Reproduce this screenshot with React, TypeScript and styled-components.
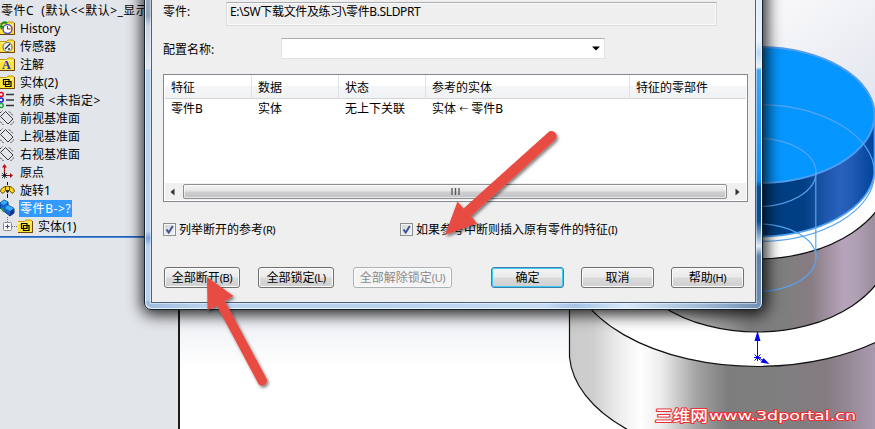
import React from "react";
import styled, { createGlobalStyle } from "styled-components";

const Global = createGlobalStyle`
  *{box-sizing:border-box}
  body{margin:0;overflow:hidden;font-family:"Noto Sans","Noto Sans CJK SC",sans-serif;font-size:12px;color:#000}
`;

const Screen = styled.div`
  position: relative;
  width: 875px;
  height: 429px;
  overflow: hidden;
  display: flex;
`;
const TreePanel = styled.div`
  width: 180px;
  height: 429px;
  flex: none;
  background: #e2e5ea;
  border-right: 2px solid #1c1c1c;
  padding-top: 1px;
`;
const TreeRow = styled.div<{ $indent?: number }>`
  display: flex;
  align-items: center;
  height: 18px;
  padding-left: ${(p) => p.$indent ?? 0}px;
  white-space: nowrap;
`;
const IconCell = styled.span`
  width: 19px;
  height: 18px;
  flex: none;
  svg { display: block; }
`;
const TreeText = styled.span<{ $selected?: boolean; $ls?: number }>`
  height: 17px;
  line-height: 17px;
  padding: 0 1px;
  letter-spacing: ${(p) => p.$ls ?? 0}px;
  color: ${(p) => (p.$selected ? "#fff" : "#000")};
  background: ${(p) => (p.$selected ? "#3399ff" : "transparent")};
`;
const Rollback = styled.div`
  height: 2px;
  margin-top: 1px;
  background: #1f62b8;
  border-bottom: 1px solid #4c86cf;
`;
const Viewport = styled.div`
  flex: 1;
  height: 429px;
  svg { display: block; }
`;

const Dialog = styled.div`
  position: absolute;
  left: 144px;
  top: -20px;
  width: 619px;
  height: 330px;
  border: 1px solid #18222c;
  border-radius: 0 0 7px 7px;
  padding: 0 6px 6px;
  background:
    linear-gradient(90deg, #9dbbdd 0, #b9d2ef 60px, #b7d1f0 230px, #c6dcf5 400px, #a3c2e6 430px, #d6e8fa 480px, #9fb9d6 560px, #6f8eb2 618px) left bottom / 100% 8px no-repeat,
    linear-gradient(180deg, #dcecfb 0, #e8f3fd 60px, #b5d9fa 72px, #e4f2fe 86px, #45a6f3 89px, #1493fa 190px, #0d8af0 200px, #0b4c93 206px, #0c4c90 240px, #dcecfb 265px, #5c83ad 275px, #6f8eb2 100%) right top / 8px 100% no-repeat,
    linear-gradient(180deg, #a2b1c4 0, #94a6bc 35px, #c9d5e3 45px, #dfe8f2 88px, #b5d0ef 89px, #bcd5f2 250px, #7ba5dc 257px, #b9d2ef 265px, #b9d2ef 100%) left top / 8px 100% no-repeat;
  box-shadow: inset 1px -1px 0 rgba(255,255,255,.7), inset -1px 0 0 #e4f3ff, 1px 2px 15px 3px rgba(0, 0, 0, 0.85);
`;
const Client = styled.div`
  height: 100%;
  background: #efefef;
  border: 1px solid #4c6076;
  border-top: 0;
  padding: 21px 7px 0 11px;
  outline: 1px solid rgba(255, 255, 255, 0.45);
`;
const FormRow = styled.div<{ $h: number }>`
  display: flex;
  height: ${(p) => p.$h}px;
`;
const Label = styled.label<{ $w: number; $drop: number }>`
  width: ${(p) => p.$w}px;
  flex: none;
  line-height: 18px;
  padding-top: ${(p) => p.$drop}px;
`;
const PathField = styled.div`
  width: 491px;
  height: 24px;
  border: 1px solid #d9dde2;
  border-top-color: #abadb3;
  box-shadow: inset 0 0 0 1px #fafafa;
  padding-left: 3px;
  line-height: 18px;
  white-space: nowrap;
  letter-spacing: -0.35px;
`;
const Combo = styled.div`
  width: 324px;
  height: 21px;
  display: flex;
  align-items: center;
  justify-content: flex-end;
  padding-right: 4px;
  background: #fff;
  border: 1px solid #dfe2e8;
  border-top-color: #abadb3;
`;
const Table = styled.div`
  margin-top: 15px;
  width: 585px;
  height: 128px;
  display: flex;
  flex-direction: column;
  background: #fff;
  border: 1px solid #828790;
`;
const Columns = styled.div<{ $head?: boolean }>`
  display: grid;
  grid-template-columns: 87px 87px 87px 204px 1fr;
  height: ${(p) => (p.$head ? 24 : 20)}px;
  line-height: ${(p) => (p.$head ? 26 : 19)}px;
  margin: 0 1px;
  border-bottom: ${(p) => (p.$head ? "1px solid #d5d5d5" : "0")};
  background: ${(p) => (p.$head ? "linear-gradient(#fff 45%, #f4f5f7 50%, #f1f2f4)" : "#fff")};
`;
const Cell = styled.div<{ $head?: boolean }>`
  padding-left: 6px;
  border-right: 1px solid ${(p) => (p.$head ? "#dfe1e5" : "transparent")};
  white-space: nowrap;
  &:last-child { border-right: 0; }
`;
const SmallArrow = styled.span`
  font-size: 9px;
  line-height: 1;
  vertical-align: 1px;
`;
const Scrollbar = styled.div`
  margin: auto 1px 1px;
  height: 17px;
  display: flex;
  background: #f0f0f0;
`;
const ScrollButton = styled.div<{ $w: number; $shift?: number }>`
  width: ${(p) => p.$w}px;
  display: flex;
  align-items: center;
  justify-content: center;
  padding-left: ${(p) => p.$shift ?? 0}px;
  padding-right: ${(p) => (p.$shift ? 0 : 3)}px;
`;
const Thumb = styled.div`
  flex: 1;
  margin: 1px 0;
  display: flex;
  align-items: center;
  justify-content: center;
  border: 1px solid #8e8f8f;
  border-radius: 2px;
  box-shadow: inset 0 0 0 1px rgba(255, 255, 255, 0.6);
  background: linear-gradient(#f3f3f3, #e5e5e6 48%, #cfcfd1 52%, #c2c3c6);
`;
const Checks = styled.div`
  display: flex;
  margin-top: 21px;
  height: 13px;
`;
const Check = styled.label<{ $w: number }>`
  width: ${(p) => p.$w}px;
  display: flex;
  align-items: center;
  gap: 3px;
  white-space: nowrap;
  line-height: 13px;
`;
const Box = styled.span`
  width: 13px;
  height: 13px;
  flex: none;
  border: 1px solid #8e8f8f;
  box-shadow: inset 0 0 0 1px #f6f6f6;
  background: linear-gradient(135deg, #cbcfd5, #f6f6f6);
  svg { display: block; }
`;
const Access = styled.span`
  font-size: 11px;
  letter-spacing: -0.4px;
`;
const Buttons = styled.div`
  display: flex;
  margin: 31px 0 0 1px;
`;
const Button = styled.button<{ $w: number; $gap?: number; $kind?: "default" | "off" }>`
  width: ${(p) => p.$w}px;
  height: 21px;
  margin: 0 ${(p) => p.$gap ?? 0}px 0 0;
  padding: 0;
  font: inherit;
  line-height: 19px;
  white-space: nowrap;
  border-radius: 3px;
  color: ${(p) => (p.$kind === "off" ? "#8a8a8a" : "#000")};
  border: 1px solid ${(p) => (p.$kind === "off" ? "#adb2b5" : p.$kind === "default" ? "#3c7fb1" : "#707070")};
  box-shadow: inset 0 0 0 ${(p) => (p.$kind === "default" ? "1px #3ccbf5" : "1px #fbfbfb")};
  background: ${(p) => (p.$kind === "off" ? "#f4f4f4" : "linear-gradient(#f2f2f2 0, #ebebeb 48%, #dadada 52%, #cfcfcf)")};
`;
const Overlay = styled.svg`
  position: absolute;
  left: 0;
  top: 0;
  pointer-events: none;
`;

const Folder = ({ children }: { children?: React.ReactNode }) => (
  <svg width="17" height="18" viewBox="0 0 17 18">
    <path d="M-1 4.5V15.5H14.5V4.5L13 3H8L6.5 4.5Z" fill="#ffe23c" stroke="#c99a00" />
    <path d="M0 6H13" stroke="#fff7a8" />
    <path d="M-1 15.5H14.5V4" fill="none" stroke="#70450c" />
    {children}
  </svg>
);
const Plane = () => (
  <svg width="17" height="18" viewBox="0 0 17 18" fill="none" stroke="#222" strokeWidth=".9">
    <path d="M0.500 7.500L5.500 2.500L13 10L8 15Z" />
    <path d="M0 4L2.500 1.500M10.500 16L14 12.500M0 12.500L3.500 16M9 2.500L13.500 7" strokeDasharray="2 1" />
  </svg>
);
const Cubes = () => (
  <g fill="none" stroke="#000" strokeWidth="1.2">
    <path d="M3.500 6.500h5.500v5h-5.500zM5.500 8.500h5.500v5h-5.500z" />
  </g>
);

const icons: Record<string, React.ReactNode> = {
  history: (
    <Folder>
      <circle cx="7.5" cy="10" r="4.5" fill="#fff" stroke="#5050bd" strokeWidth="1.5" />
      <path d="M7.500 7v3h3" fill="none" stroke="#d31616" />
      <path d="M1 8C1 4 4 2 7 4" fill="none" stroke="#148f22" strokeWidth="2" />
      <path d="M0 7h4l-3 4z" fill="#148f22" />
    </Folder>
  ),
  sensor: (
    <Folder>
      <circle cx="7.5" cy="10" r="4.5" fill="#eaf0f4" stroke="#777" strokeWidth="1.2" />
      <path d="M5 12l5-5M8 12h2" stroke="#23313e" strokeWidth="1.3" />
    </Folder>
  ),
  note: (
    <Folder>
      <text x="2" y="14" fontFamily="Liberation Serif" fontWeight="bold" fontSize="12" fill="#1533bd">A</text>
    </Folder>
  ),
  body: <Folder><Cubes /></Folder>,
  material: (
    <svg width="17" height="18" viewBox="0 0 17 18">
      <g strokeWidth="1.5" fill="#fff">
        <circle cx="1.2" cy="3.5" r="2" stroke="#e00020" />
        <circle cx="1.2" cy="9" r="2" stroke="#1720d0" />
        <circle cx="1.2" cy="14.5" r="2" stroke="#11a52d" />
      </g>
      <path d="M6 3.500h8M6 9h8M6 14.500h8" stroke="#333" strokeWidth="1.6" />
    </svg>
  ),
  plane: <Plane />,
  origin: (
    <svg width="17" height="18" viewBox="0 0 17 18">
      <path d="M4.500 12V2M5 12.500H12" stroke="#a80b16" strokeWidth="1.2" />
      <path d="M2 4.500L4.500 1L7 4.500ZM10 10l3 2.500L10 15Z" fill="#b20b16" />
      <path d="M2 10l5 5M7 10l-5 5M1.500 12.500h6M4.500 9.500v6" stroke="#111" strokeWidth=".8" />
    </svg>
  ),
  revolve: (
    <svg width="17" height="18" viewBox="0 0 17 18">
      <path d="M7.500 1v3M7.500 13v4" stroke="#111" />
      <path d="M.5 10.500C1 3.500 14 3.500 14.500 10.500L12 12.500L9.500 9.500H5.500L3 12.500Z" fill="#ffd52c" stroke="#665000" />
      <path d="M5.500 5.500v4M9.500 5.500v4" stroke="#665000" />
      <path d="M5.500 9.500h4l-2 3z" fill="#2b2100" />
    </svg>
  ),
  part: (
    <svg width="17" height="18" viewBox="0 0 17 18">
      <path d="M0 4L4 1L8 3V6L14 9.500V14L10 17L0 9Z" fill="#1267cf" stroke="#062c78" />
      <path d="M0 4L4 1L8 3L4 6ZM5 9L8 6L14 9.500L10 12Z" fill="#35aef8" />
      <path d="M10 12V16L13.500 13.500V10Z" fill="#0a378f" />
      <path d="M1 9l3 4" stroke="#2fa33a" strokeWidth="1.5" />
    </svg>
  ),
};

const rows: { t: string; i: string; ls?: number; sel?: boolean }[] = [
  { t: "History", i: "history" },
  { t: "传感器", i: "sensor" },
  { t: "注解", i: "note" },
  { t: "实体(2)", i: "body" },
  { t: "材质 <未指定>", i: "material", ls: 0.5 },
  { t: "前视基准面", i: "plane" },
  { t: "上视基准面", i: "plane" },
  { t: "右视基准面", i: "plane" },
  { t: "原点", i: "origin" },
  { t: "旋转1", i: "revolve" },
  { t: "零件B->?", i: "part", sel: true, ls: 0.6 },
];

const Tick = () => (
  <svg width="11" height="11" viewBox="0 0 11 11">
    <path d="M2.500 5.500L4.700 8.500L8.800 2" fill="none" stroke="#3c5198" strokeWidth="1.9" />
  </svg>
);

const Model = () => (
  <svg width="695" height="429" viewBox="180 0 695 429">
    <defs>
      <linearGradient id="sky" x1="0" y1="0" x2="0" y2="1">
        <stop offset="0" stopColor="#f4f5f7" />
        <stop offset=".28" stopColor="#dfe2ea" />
        <stop offset=".72" stopColor="#eceef3" />
        <stop offset=".86" stopColor="#fff" />
      </linearGradient>
      <linearGradient id="corner" gradientUnits="userSpaceOnUse" x1="790" y1="0" x2="870" y2="110">
        <stop offset="0" stopColor="#f8f8fa" />
        <stop offset="1" stopColor="#e2e5ee" />
      </linearGradient>
      <linearGradient id="base" gradientUnits="userSpaceOnUse" x1="569" y1="0" x2="875" y2="0">
        <stop offset="0" stopColor="#cacaca" />
        <stop offset=".08" stopColor="#cfcfcf" />
        <stop offset=".16" stopColor="#ececec" />
        <stop offset=".235" stopColor="#fff" />
        <stop offset=".3" stopColor="#ededed" />
        <stop offset=".42" stopColor="#a2a2a2" />
        <stop offset=".52" stopColor="#7d7d7d" />
        <stop offset=".68" stopColor="#7f7e7f" />
        <stop offset=".84" stopColor="#857b82" />
        <stop offset="1" stopColor="#aa9aaf" />
      </linearGradient>
      <linearGradient id="mid" gradientUnits="userSpaceOnUse" x1="660" y1="0" x2="875" y2="0">
        <stop offset="0" stopColor="#f0f0f0" />
        <stop offset=".2" stopColor="#b0b0b0" />
        <stop offset=".42" stopColor="#7d7d7d" />
        <stop offset=".6" stopColor="#7f7e7f" />
        <stop offset=".7" stopColor="#877c83" />
        <stop offset=".85" stopColor="#b5a3b9" />
        <stop offset=".9" stopColor="#b3a2b7" />
        <stop offset="1" stopColor="#9b8d9d" />
      </linearGradient>
      <linearGradient id="blue" gradientUnits="userSpaceOnUse" x1="757" y1="0" x2="875" y2="0">
        <stop offset="0" stopColor="#003d80" />
        <stop offset=".4" stopColor="#003f85" />
        <stop offset=".52" stopColor="#164f9f" />
        <stop offset=".7" stopColor="#2962be" />
        <stop offset=".8" stopColor="#205bb5" />
        <stop offset="1" stopColor="#00429a" />
      </linearGradient>
    </defs>
    <rect x="180" width="695" height="429" fill="url(#sky)" />
    <rect x="757" width="118" height="200" fill="url(#corner)" />
    <path d="M569.500 258V357A188 108 0 0 0 945 357V258Z" fill="url(#base)" stroke="#111" strokeWidth="1.200" />
    <ellipse cx="757" cy="258.500" rx="188" ry="108" fill="#fff" stroke="#111" strokeWidth="1.200" />
    <path d="M622 169V242A135 90 0 0 0 892 242V169Z" fill="url(#mid)" stroke="#111" strokeWidth="1.200" />
    <ellipse cx="757" cy="169" rx="135" ry="90" fill="#fff" stroke="#111" strokeWidth="1.200" />
    <path d="M640 115V173A117.500 68 0 0 0 874.500 173V115Z" fill="url(#blue)" stroke="#4f9ff0" strokeWidth="1.800" />
    <ellipse cx="757" cy="115" rx="117.500" ry="68" fill="#0696ff" stroke="#4d9df0" strokeWidth="2" />
    <g fill="none" stroke="#57a5f3" strokeWidth="1.200">
      <ellipse cx="757" cy="173" rx="117.500" ry="68.500" />
      <ellipse cx="757" cy="172.500" rx="59" ry="34.200" />
      <ellipse cx="757" cy="257.500" rx="59" ry="33.800" />
      <path d="M815.800 172V258" />
    </g>
    <g stroke="#0b0be8" fill="#0000f0">
      <path d="M757.500 357V338M757.500 357L764 361" />
      <path d="M754.500 341L757.500 331L760.500 341ZM760.500 362.500L763.500 358L769.500 364Z" stroke="none" />
      <path d="M754 357.500h7M754.500 354.500l6 6M760.500 354.500l-6 6M757.500 353v8" />
    </g>
    <g fill="#fff" stroke="#ec2f35" strokeWidth="2" paintOrder="stroke" strokeLinejoin="round">
      <text x="655" y="421" fontFamily="Noto Sans CJK SC" fontWeight="500" fontSize="14.500" textLength="53" lengthAdjust="spacingAndGlyphs">三维网</text>
      <text x="709" y="420" fontFamily="DejaVu Sans" fontSize="12" textLength="147" lengthAdjust="spacingAndGlyphs">www.3dportal.cn</text>
    </g>
  </svg>
);

export default function App() {
  return (
    <>
      <Global />
      <Screen>
        <TreePanel>
          <TreeRow>
            <TreeText $ls={0.5}>零件C&nbsp; (默认&lt;&lt;默认&gt;_显示</TreeText>
          </TreeRow>
          {rows.map((r) => (
            <TreeRow key={r.t}>
              <IconCell>{icons[r.i]}</IconCell>
              <TreeText $selected={r.sel} $ls={r.ls}>{r.t}</TreeText>
            </TreeRow>
          ))}
          <TreeRow $indent={2}>
            <svg width="16" height="18" viewBox="0 0 16 18">
              <path d="M5.500 0v5M10 9.500h6" stroke="#777" strokeDasharray="1 1" />
              <rect x="1.5" y="5.5" width="8" height="8" rx="1" fill="#fafafa" stroke="#8b8b8b" />
              <path d="M3.500 9.500h4M5.500 7.500v4" stroke="#2b3d95" />
            </svg>
            <IconCell><Folder><Cubes /></Folder></IconCell>
            <TreeText $ls={0.1}>实体(1)</TreeText>
          </TreeRow>
          <Rollback />
        </TreePanel>
        <Viewport><Model /></Viewport>

        <Dialog>
          <Client>
            <FormRow $h={36}>
              <Label $w={63} $drop={1}>零件:</Label>
              <PathField>E:\SW下载文件及练习\零件B.SLDPRT</PathField>
            </FormRow>
            <FormRow $h={21}>
              <Label $w={118} $drop={3}>配置名称:</Label>
              <Combo>
                <svg width="8" height="5" viewBox="0 0 8 5"><path d="M0 .5H8L4 4.500Z" fill="#000" /></svg>
              </Combo>
            </FormRow>
            <Table>
              <Columns $head>
                {["特征", "数据", "状态", "参考的实体", "特征的零部件"].map((h) => <Cell $head key={h}>{h}</Cell>)}
              </Columns>
              <Columns>
                <Cell>零件B</Cell>
                <Cell>实体</Cell>
                <Cell>无上下关联</Cell>
                <Cell>实体 <SmallArrow>←</SmallArrow> 零件B</Cell>
              </Columns>
              <Scrollbar>
                <ScrollButton $w={18}>
                  <svg width="5" height="8" viewBox="0 0 5 8"><path d="M4.500 0.500V7.500L.5 4Z" fill="#333" /></svg>
                </ScrollButton>
                <Thumb>
                  <svg width="9" height="7" viewBox="0 0 9 7"><path d="M1 0v7M4.500 0v7M8 0v7" stroke="#555" strokeWidth="1.3" /></svg>
                </Thumb>
                <ScrollButton $w={19} $shift={2}>
                  <svg width="5" height="8" viewBox="0 0 5 8"><path d="M.5 .5V7.500L4.500 4Z" fill="#333" /></svg>
                </ScrollButton>
              </Scrollbar>
            </Table>
            <Checks>
              <Check $w={237}><Box><Tick /></Box><span>列举断开的参考<Access>(R)</Access></span></Check>
              <Check $w={240}><Box><Tick /></Box><span>如果参考中断则插入原有零件的特征<Access>(I)</Access></span></Check>
            </Checks>
            <Buttons>
              <Button $w={76} $gap={18}>全部断开<Access>(B)</Access></Button>
              <Button $w={76} $gap={19}>全部锁定<Access>(L)</Access></Button>
              <Button $w={99} $gap={39} $kind="off">全部解除锁定<Access>(U)</Access></Button>
              <Button $w={73} $gap={17} $kind="default">确定</Button>
              <Button $w={73} $gap={17}>取消</Button>
              <Button $w={73}>帮助<Access>(H)</Access></Button>
            </Buttons>
          </Client>
        </Dialog>

        <Overlay width="875" height="429" viewBox="0 0 875 429">
          <defs>
            <filter id="drop" x="-20%" y="-20%" width="150%" height="150%">
              <feDropShadow dx="1.5" dy="2" stdDeviation="1.8" floodOpacity=".5" />
            </filter>
          </defs>
          <g fill="#e84b43" filter="url(#drop)">
            <path d="M445 235L457.500 201.500L463.500 208.500L548 132.500A5 5 0 0 1 555 140L471 216L477 223.500Z" />
            <path d="M207 277L233.500 296L225 301L267 379.500A5 5 0 0 1 258.500 384L217 306L207.500 310Z" />
          </g>
        </Overlay>
      </Screen>
    </>
  );
}
